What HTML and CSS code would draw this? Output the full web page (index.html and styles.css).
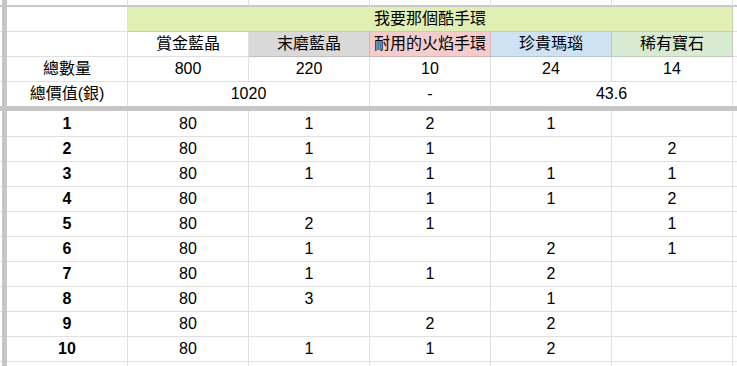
FILE: index.html
```html
<!DOCTYPE html>
<html lang="zh-Hant">
<head>
<meta charset="utf-8">
<title>我要那個酷手環</title>
<link rel="stylesheet" href="styles.css">
</head>
<body>
<div class="sheet">
  <div class="vbar"></div>
  <div class="hbar"></div>

  <!-- partial top row -->
  <div class="c edge top"></div><div class="c top"></div><div class="c top"></div><div class="c top"></div><div class="c top"></div><div class="c top"></div><div class="c top"></div><div class="c top"></div>

  <!-- title row -->
  <div class="c edge"></div><div class="c"></div><div class="c title span5">我要那個酷手環</div><div class="c"></div>

  <!-- header row -->
  <div class="c edge"></div><div class="c"></div>
  <div class="c">賞金藍晶</div>
  <div class="c gray">末磨藍晶</div>
  <div class="c pink">耐用的火焰手環</div>
  <div class="c blue">珍貴瑪瑙</div>
  <div class="c green">稀有寶石</div>
  <div class="c"></div>

  <!-- totals -->
  <div class="c edge"></div><div class="c">總數量</div><div class="c">800</div><div class="c">220</div><div class="c">10</div><div class="c">24</div><div class="c">14</div><div class="c"></div>
  <div class="c edge nob"></div><div class="c nob">總價值(銀)</div><div class="c nob span2">1020</div><div class="c nob">-</div><div class="c nob span2">43.6</div><div class="c nob"></div>

  <!-- data rows -->
  <div class="c edge"></div><div class="c b">1</div><div class="c">80</div><div class="c">1</div><div class="c">2</div><div class="c">1</div><div class="c"></div><div class="c"></div>
  <div class="c edge"></div><div class="c b">2</div><div class="c">80</div><div class="c">1</div><div class="c">1</div><div class="c"></div><div class="c">2</div><div class="c"></div>
  <div class="c edge"></div><div class="c b">3</div><div class="c">80</div><div class="c">1</div><div class="c">1</div><div class="c">1</div><div class="c">1</div><div class="c"></div>
  <div class="c edge"></div><div class="c b">4</div><div class="c">80</div><div class="c"></div><div class="c">1</div><div class="c">1</div><div class="c">2</div><div class="c"></div>
  <div class="c edge"></div><div class="c b">5</div><div class="c">80</div><div class="c">2</div><div class="c">1</div><div class="c"></div><div class="c">1</div><div class="c"></div>
  <div class="c edge"></div><div class="c b">6</div><div class="c">80</div><div class="c">1</div><div class="c"></div><div class="c">2</div><div class="c">1</div><div class="c"></div>
  <div class="c edge"></div><div class="c b">7</div><div class="c">80</div><div class="c">1</div><div class="c">1</div><div class="c">2</div><div class="c"></div><div class="c"></div>
  <div class="c edge"></div><div class="c b">8</div><div class="c">80</div><div class="c">3</div><div class="c"></div><div class="c">1</div><div class="c"></div><div class="c"></div>
  <div class="c edge"></div><div class="c b">9</div><div class="c">80</div><div class="c"></div><div class="c">2</div><div class="c">2</div><div class="c"></div><div class="c"></div>
  <div class="c edge"></div><div class="c b">10</div><div class="c">80</div><div class="c">1</div><div class="c">1</div><div class="c">2</div><div class="c"></div><div class="c"></div>

  <!-- partial bottom row -->
  <div class="c edge"></div><div class="c"></div><div class="c"></div><div class="c"></div><div class="c"></div><div class="c"></div><div class="c"></div><div class="c"></div>
</div>
</body>
</html>
```

FILE: styles.css
```css
html, body {
  margin: 0;
  padding: 0;
  background: #ffffff;
  overflow: hidden;
}

.sheet {
  display: grid;
  grid-template-columns: 2px 5px repeat(6, 121px) 5px;
  grid-template-rows: 7px 25px 25px 25px 24px 5px 26px repeat(9, 25px) 5px;
  width: 737px;
  height: 366px;
  overflow: hidden;
  font-family: "Liberation Sans", "Noto Sans CJK TC", Arial, sans-serif;
  font-size: 16px;
  color: #000000;
}

.vbar {
  grid-column: 2;
  grid-row: 1 / -1;
  background: #c6c6c6;
}

.hbar {
  grid-column: 1 / -1;
  grid-row: 6;
  background: #c6c6c6;
}

.c {
  box-sizing: border-box;
  border-right: 1px solid rgba(0, 0, 0, 0.12);
  border-bottom: 1px solid rgba(0, 0, 0, 0.12);
  display: flex;
  align-items: center;
  justify-content: center;
  white-space: nowrap;
  overflow: hidden;
  line-height: 1;
  background: #ffffff;
}

.edge {
  border-right: none;
}

.top {
  border-bottom: 2px solid #c8c8c8;
}

.nob {
  border-bottom: none;
}

.span5 {
  grid-column: span 5;
}

.span2 {
  grid-column: span 2;
}

.title {
  background: #e2efb4;
}

.gray {
  background: #d9d9d9;
}

.pink {
  background: #f4cccc;
}

.blue {
  background: #cfe2f3;
}

.green {
  background: #d9ead3;
}

.b {
  font-weight: bold;
}
```
